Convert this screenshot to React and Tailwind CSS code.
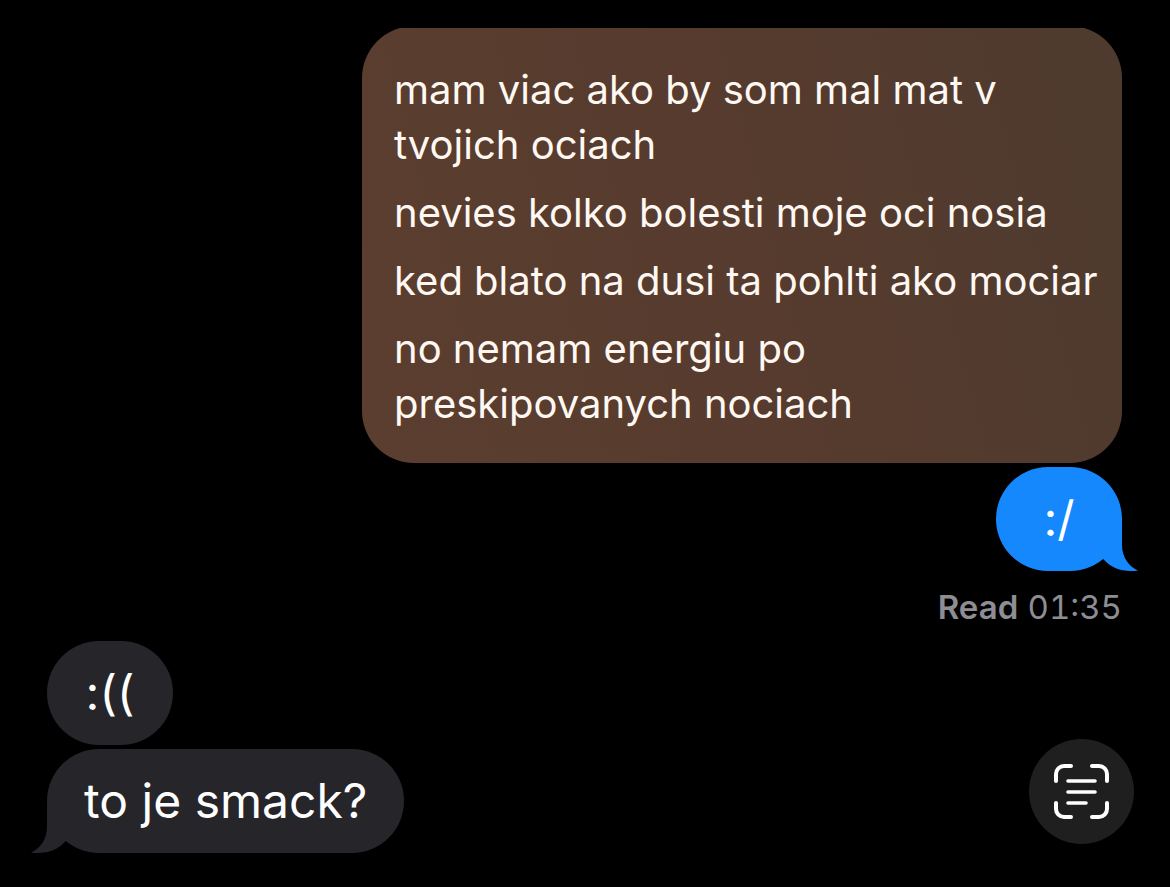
const poem = [
  "mam viac ako by som mal mat v tvojich ociach",
  "nevies kolko bolesti moje oci nosia",
  "ked blato na dusi ta pohlti ako mociar",
  "no nemam energiu po preskipovanych nociach"
]

// Right-hand tail, mirrored for incoming messages
const Tail = ({ className }) => (
  <svg
    viewBox="0 0 44 52"
    className={`absolute bottom-0 w-11 h-[52px] ${className}`}
    fill="currentColor"
    aria-hidden="true"
  >
    <path d="M4 0H28V26C28 38 35 48 44 51.4C31 53.5 18 50 9.5 40.2L4 30Z" />
  </svg>
)

const Bubble = ({ text, mine, tail }) => (
  <div
    className={`relative min-w-[126px] rounded-[52px] px-[37px] py-6 text-center text-[48px] leading-[56px] ${
      mine ? "bg-[#1688fe] text-[#1688fe]" : "bg-[#262529] text-[#262529]"
    }`}
  >
    {tail && <Tail className={mine ? "-right-4" : "-left-4 -scale-x-100"} />}
    <p className="relative text-white">{text}</p>
  </div>
)

const PoemBubble = () => (
  <div className="w-[760px] max-w-full overflow-hidden">
    <div className="-mt-0.5 rounded-[52px] bg-linear-75 from-[#5b3e2f] via-[#563b2e] to-[#4e3a2e] pt-9 pr-3 pb-8 pl-8 text-[40px] leading-[55px] text-[#fff8f2] space-y-[13px]">
      {poem.map((line) => (
        <p key={line}>{line}</p>
      ))}
    </div>
  </div>
)

const ScanTextButton = () => (
  <button
    type="button"
    aria-label="Scan text"
    className="absolute right-9 bottom-[43px] flex size-[105px] items-center justify-center rounded-full bg-[#1f1f1f] text-white"
  >
    <svg
      viewBox="0 0 56 56"
      className="size-14"
      fill="none"
      stroke="currentColor"
      strokeWidth="4"
      strokeLinecap="round"
      aria-hidden="true"
    >
      <path d="M2 17V10a8 8 0 0 1 8-8H17M38 2h7a8 8 0 0 1 8 8v7M53 39v6a8 8 0 0 1-8 8H38M17 53H10a8 8 0 0 1-8-8V39" />
      <path d="M14 17H41M14 28H41M14 39H32" strokeWidth="3.6" />
    </svg>
  </button>
)

export default function App() {
  return (
    <main className="relative min-h-screen bg-black pt-7 pr-12 pb-[33px] pl-[47px] font-['Inter',sans-serif]">
      {/* Outgoing */}
      <section className="flex flex-col items-end gap-1">
        <PoemBubble />
        <Bubble text=":/" mine tail />
      </section>

      <p className="mt-4 text-right text-[33px] leading-10 text-[#8d8d93]">
        <span className="font-semibold">Read</span> <span className="tabular-nums">01:35</span>
      </p>

      {/* Incoming */}
      <section className="mt-[14px] flex flex-col items-start gap-1">
        <Bubble text=":((" />
        <Bubble text="to je smack?" tail />
      </section>

      <ScanTextButton />
    </main>
  )
}
